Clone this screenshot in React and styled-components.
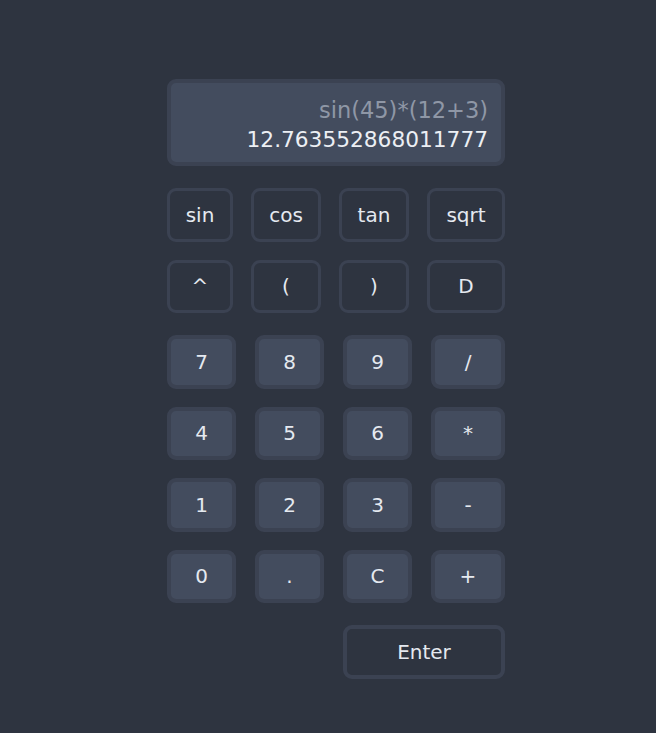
import React from "react";
import styled, { createGlobalStyle } from "styled-components";

const GlobalStyle = createGlobalStyle`
  html, body {
    margin: 0;
    padding: 0;
    background: #2e3440;
    font-family: "DejaVu Sans", Verdana, sans-serif;
  }
`;

const Page = styled.div`
  min-height: 733px;
  box-sizing: border-box;
  padding: 79px 0 0 167px;
`;

const Calculator = styled.div`
  width: 338px;
  display: flex;
  flex-direction: column;
`;

const Display = styled.div`
  box-sizing: border-box;
  height: 87px;
  border: 4px solid #3b4252;
  border-radius: 9px;
  background: #434c5e;
  padding: 13px 13px 0 0;
  text-align: right;
`;

const Expression = styled.div`
  font-size: 22.5px;
  line-height: 29px;
  color: #8f97a6;
`;

const Result = styled.div`
  font-size: 21.7px;
  line-height: 29px;
  color: #eceff4;
`;

const FuncGrid = styled.div`
  display: grid;
  grid-template-columns: 66px 70px 70px 78px;
  grid-auto-rows: 53.5px;
  gap: 18px;
  margin-top: 22px;
`;

const NumGrid = styled.div`
  display: grid;
  grid-template-columns: 69px 69px 69px 74px;
  grid-auto-rows: 53.5px;
  column-gap: 19px;
  row-gap: 18px;
  margin-top: 22px;
`;

const Key = styled.button`
  box-sizing: border-box;
  margin: 0;
  padding: 0;
  font-family: "DejaVu Sans", Verdana, sans-serif;
  font-size: 20px;
  color: #e5e9f0;
  border-radius: 9px;
  border: ${({ $filled }) => ($filled ? "4px" : "3px")} solid #3b4252;
  background: ${({ $filled }) => ($filled ? "#434c5e" : "transparent")};
  grid-column: ${({ $span }) => $span || "auto"};
  cursor: pointer;
`;

const EnterRow = styled.div`
  display: grid;
  grid-template-columns: 69px 69px 69px 74px;
  grid-auto-rows: 53.5px;
  column-gap: 19px;
  margin-top: 22px;
`;

const EnterKey = styled(Key)`
  border-width: 4px;
`;

export default function App() {
  const funcs = ["sin", "cos", "tan", "sqrt", "^", "(", ")", "D"];
  const nums = ["7", "8", "9", "/", "4", "5", "6", "*", "1", "2", "3", "-", "0", ".", "C", "+"];

  return (
    <Page>
      <GlobalStyle />
      <Calculator>
        <Display>
          <Expression>sin(45)*(12+3)</Expression>
          <Result>12.763552868011777</Result>
        </Display>
        <FuncGrid>
          {funcs.map((f) => (
            <Key key={f}>{f}</Key>
          ))}
        </FuncGrid>
        <NumGrid>
          {nums.map((n) => (
            <Key key={n} $filled>
              {n}
            </Key>
          ))}
        </NumGrid>
        <EnterRow>
          <EnterKey $span="3 / 5">Enter</EnterKey>
        </EnterRow>
      </Calculator>
    </Page>
  );
}
